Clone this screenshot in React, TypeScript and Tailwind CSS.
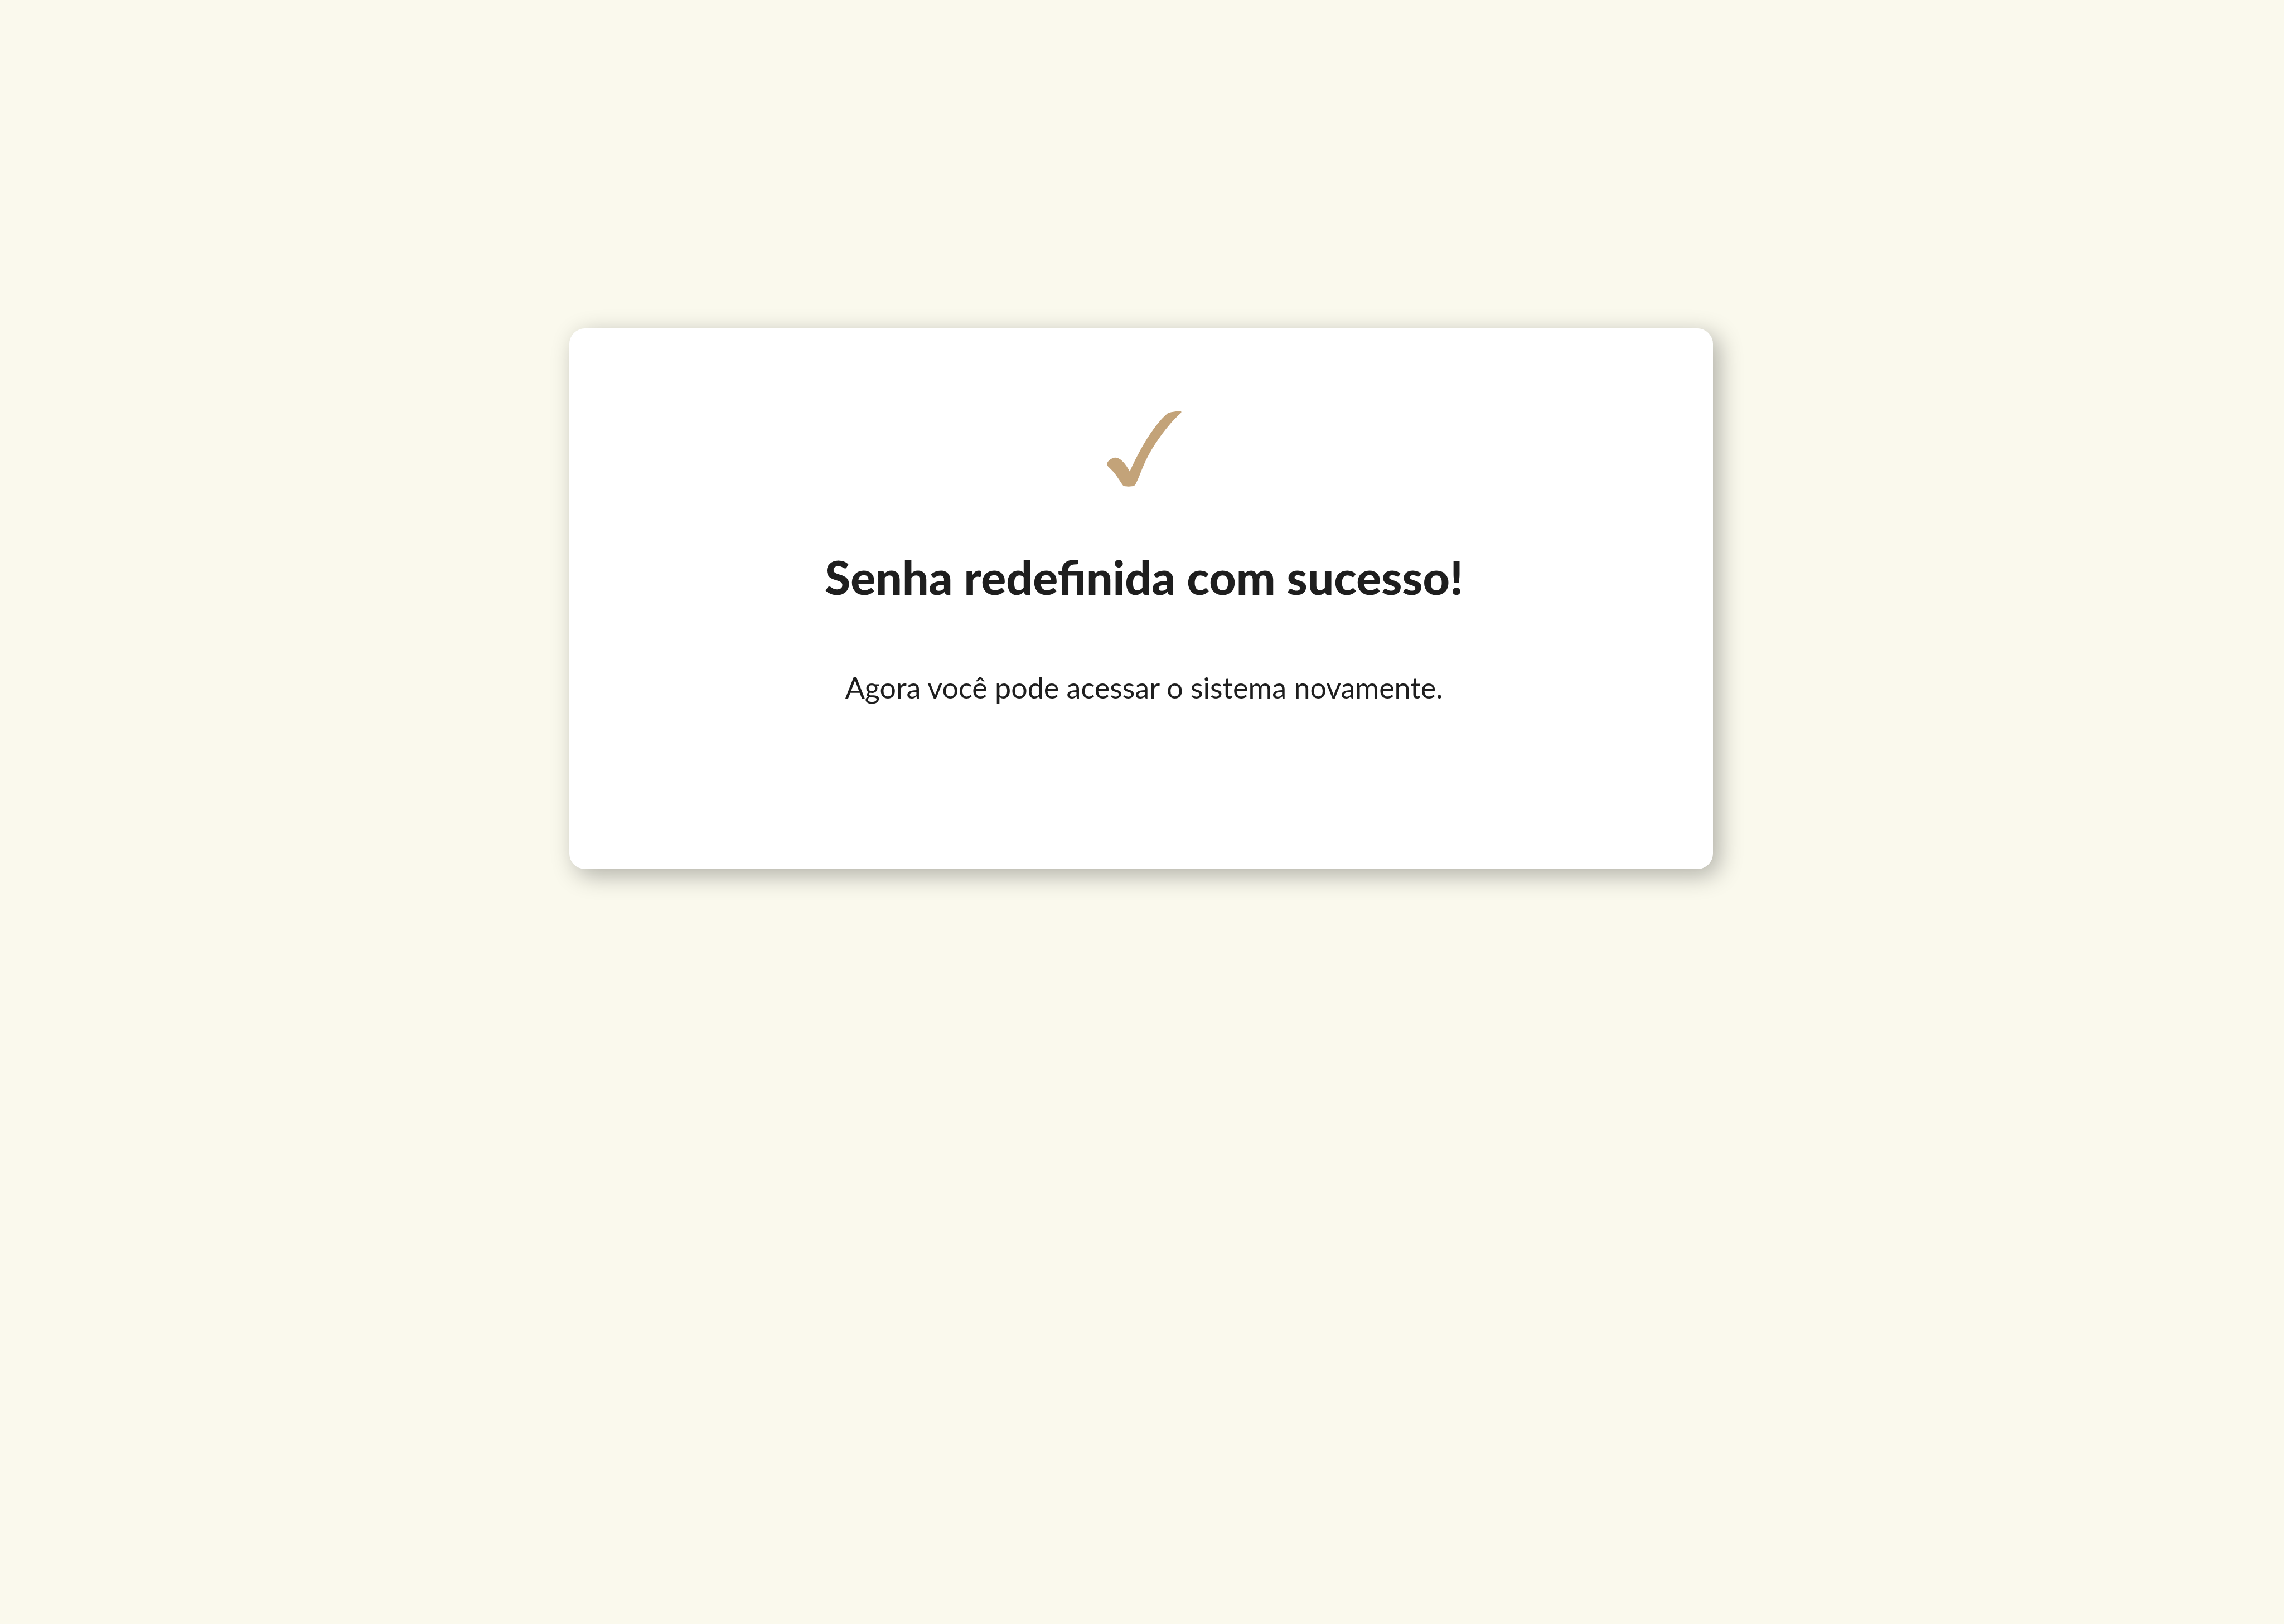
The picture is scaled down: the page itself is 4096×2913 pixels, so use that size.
function CheckIcon() {
  return (
    <svg viewBox="90 78 565 574" className="h-[136px] w-[134px]" fill="#c3a379" aria-hidden="true">
      <path d="M91 481C91 457 130 432 153 432C195 432 235 485 263 537C320 408 432 196 548 98C565 86 615 82 645 79C653 79 656 87 650 94C555 178 430 345 370 485C350 530 330 590 307 633C298 650 275 650 255 651C235 651 220 651 212 643C185 605 165 568 130 530C105 503 91 495 91 481Z" />
    </svg>
  );
}

export default function App() {
  return (
    <main className="min-h-screen bg-[#faf9ed] pt-[589px] font-['Lato',sans-serif] text-[#1e1e1e]">
      <section className="ml-[24.93%] flex min-h-[970px] w-[50.07%] flex-col items-center rounded-[28px] bg-white pt-[148px] pl-2.5 text-center shadow-[11px_11px_43px_rgba(0,0,0,0.3)]">
        <CheckIcon />
        <h1 className="mt-[114px] text-[84px] leading-[96px] font-black">Senha redefinida com sucesso!</h1>
        <p className="mt-[118px] text-[52px] leading-[64px]">Agora você pode acessar o sistema novamente.</p>
      </section>
    </main>
  );
}
